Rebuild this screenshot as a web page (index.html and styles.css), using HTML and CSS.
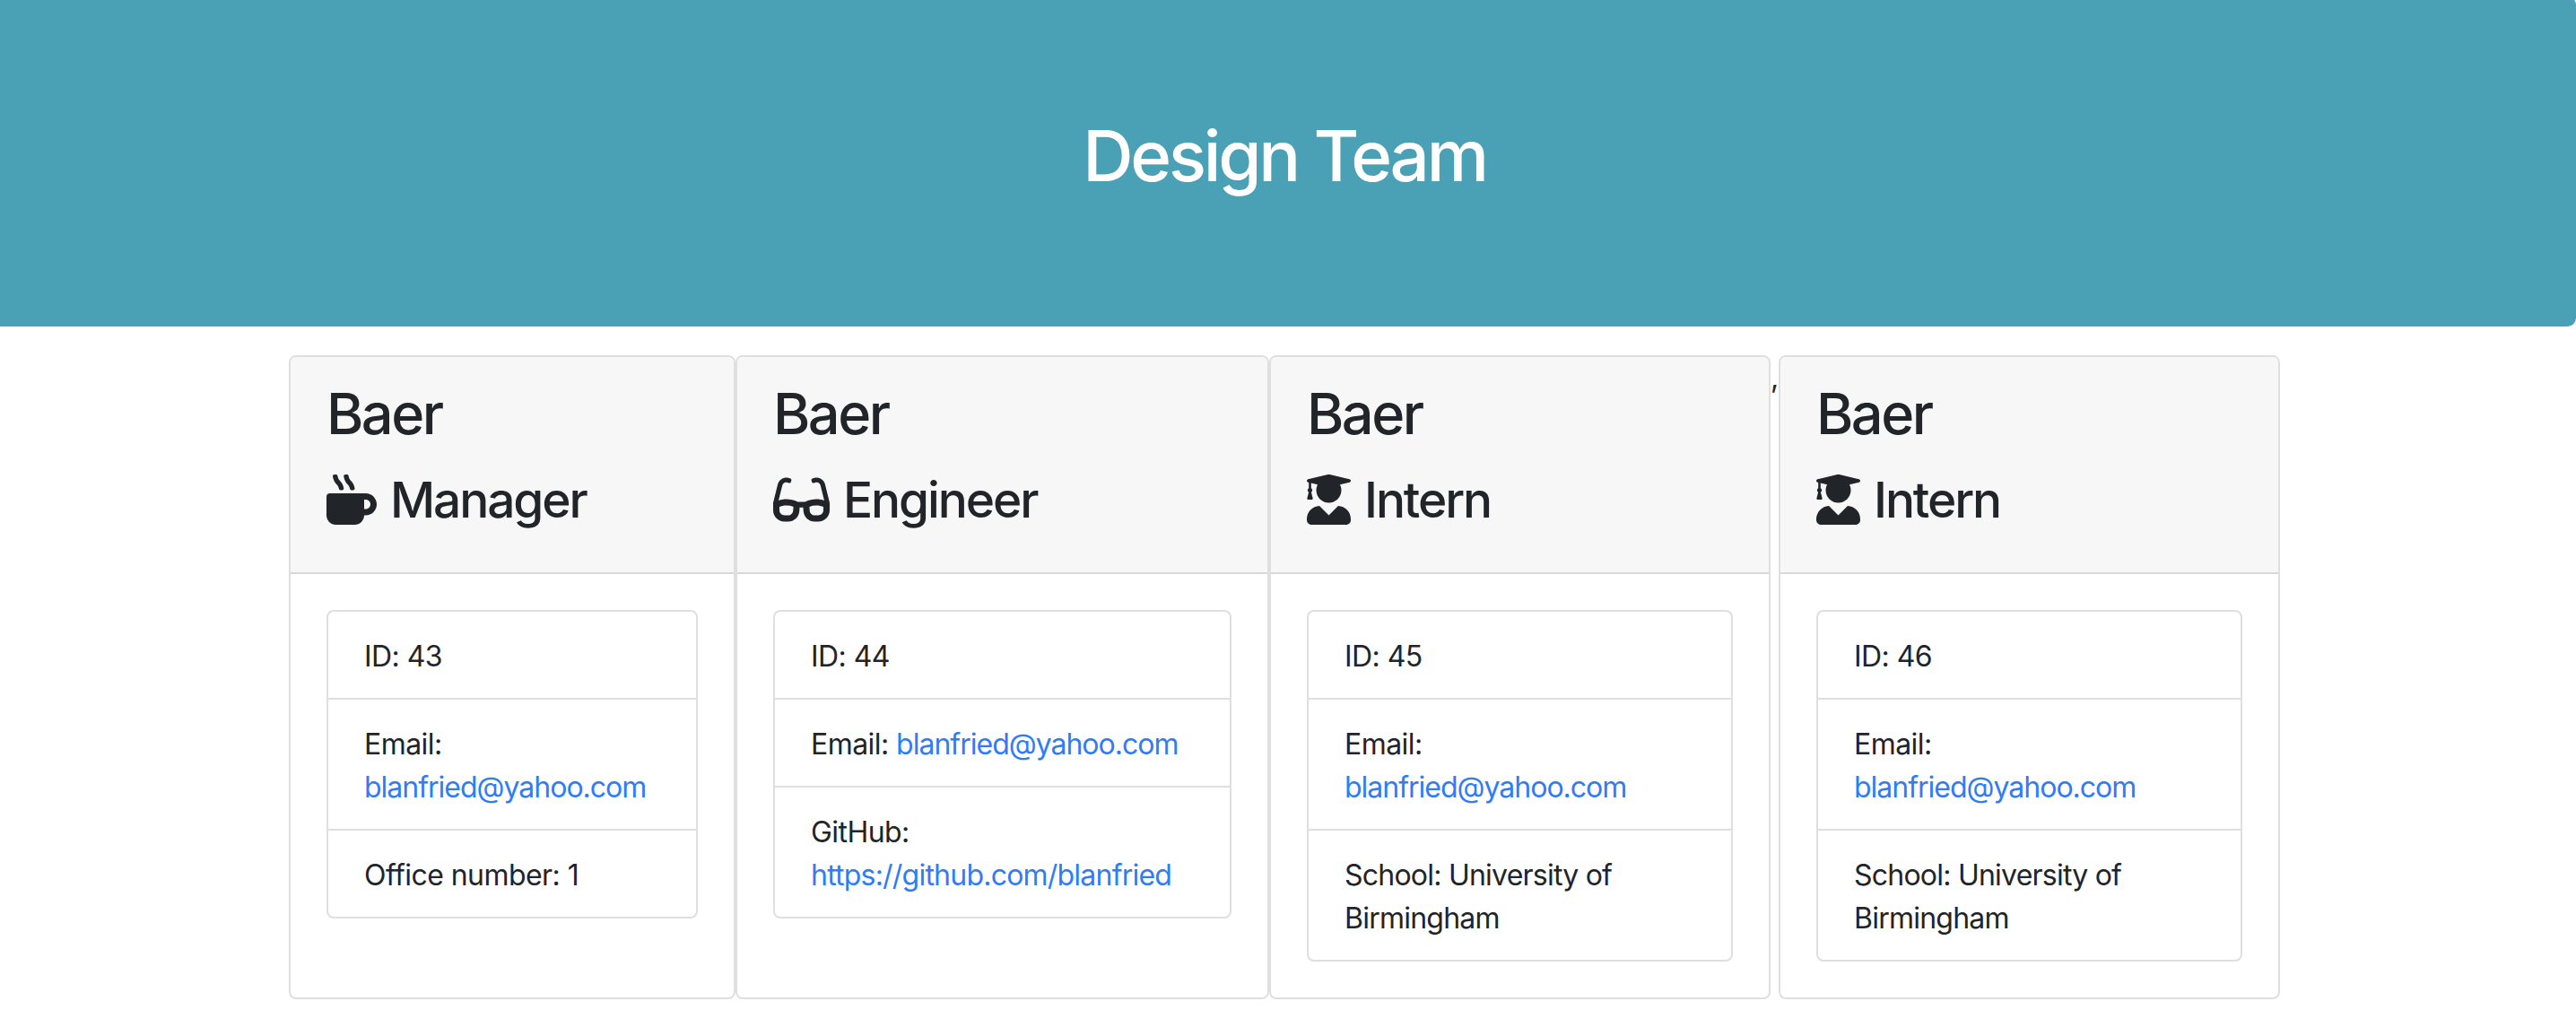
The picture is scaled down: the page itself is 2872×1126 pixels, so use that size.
FILE: index.html
```html
<!DOCTYPE html>
<html lang="en">
<head>
<meta charset="utf-8">
<title>Design Team</title>
<link rel="stylesheet" href="styles.css">
</head>
<body>
<svg class="sprite" aria-hidden="true">
  <symbol id="mug" viewBox="0 0 512 512"><path d="M127.1 146.5c1.3 7.7 8 13.5 16 13.5h16.5c9.8 0 17.6-8.5 16.3-18-3.8-28.2-16.4-54.2-36.6-74.7-14.4-14.7-23.6-33.3-26.4-53.5C111.8 5.9 105 0 96.8 0H80.4C70.6 0 63 8.5 64.1 18c3.9 31.9 18 61.3 40.6 84.4 12 12.2 19.7 27.5 22.4 44.1zm112 0c1.3 7.7 8 13.5 16 13.5h16.5c9.8 0 17.6-8.5 16.3-18-3.8-28.2-16.4-54.2-36.6-74.7-14.4-14.7-23.6-33.3-26.4-53.5C223.8 5.9 217 0 208.8 0h-16.4c-9.8 0-17.5 8.5-16.3 18 3.9 31.9 18 61.3 40.6 84.4 12 12.2 19.7 27.5 22.4 44.1zM400 192H32c-17.7 0-32 14.3-32 32v192c0 53 43 96 96 96h192c53 0 96-43 96-96h16c61.8 0 112-50.2 112-112s-50.2-112-112-112zm0 160h-16v-96h16c26.5 0 48 21.5 48 48s-21.5 48-48 48z"/></symbol>
  <symbol id="glasses" viewBox="0 0 576 512"><path d="M574.1 280.37L528.75 98.66c-5.91-23.7-21.59-44.05-43-55.81-21.44-11.73-46.97-14.11-70.19-6.33l-15.25 5.08c-8.39 2.79-12.92 11.86-10.12 20.24l5.06 15.18c2.79 8.38 11.85 12.91 20.23 10.12l13.18-4.39c10.87-3.62 23-3.57 33.16 1.73 10.29 5.37 17.57 14.56 20.37 25.82l38.46 153.82c-22.19-6.81-49.79-12.46-81.2-12.46-34.77 0-73.98 7.02-114.85 26.74h-73.18c-40.87-19.74-80.08-26.75-114.86-26.75-31.42 0-59.02 5.65-81.21 12.46l38.46-153.83c2.79-11.25 10.09-20.45 20.38-25.81 10.16-5.3 22.28-5.35 33.15-1.73l13.17 4.39c8.38 2.79 17.44-1.74 20.23-10.12l5.06-15.18c2.8-8.38-1.73-17.45-10.12-20.24l-15.25-5.08c-23.22-7.78-48.75-5.41-70.19 6.33-21.41 11.77-37.09 32.11-43 55.8L1.9 280.37A64.218 64.218 0 0 0 0 295.86v70.25C0 429.01 51.58 480 115.2 480h37.12c60.28 0 110.37-45.94 114.88-105.37l2.93-38.63h35.75l2.93 38.63C313.31 434.06 363.4 480 423.68 480h37.12c63.62 0 115.2-50.99 115.2-113.88v-70.25c0-5.23-.64-10.43-1.9-15.5zm-370.72 89.42c-1.97 25.91-24.4 46.21-51.06 46.21H115.2C86.97 416 64 393.62 64 366.11v-37.54c18.12-6.49 43.42-12.92 72.58-12.92 23.86 0 47.26 4.33 69.93 12.92l-3.13 41.22zM512 366.12c0 27.51-22.97 49.88-51.2 49.88h-37.12c-26.67 0-49.1-20.3-51.06-46.21l-3.13-41.22c22.67-8.59 46.07-12.92 69.95-12.92 29.13 0 54.43 6.44 72.55 12.93v37.54z"/></symbol>
  <symbol id="graduate" viewBox="0 0 448 512"><path d="M319.4 320.6L224 416l-95.4-95.4C57.1 323.7 0 382.2 0 454.4v9.6c0 26.5 21.5 48 48 48h352c26.5 0 48-21.5 48-48v-9.6c0-72.2-57.1-130.7-128.6-133.8zM13.6 79.8l6.4 1.5v58.4c-7 4.2-12 11.5-12 20.3 0 8.4 4.6 15.4 11.1 19.7L3.5 242c-1.7 6.9 2.1 14 7.6 14h41.8c5.5 0 9.3-7.1 7.6-14l-15.6-62.3C51.4 175.4 56 168.4 56 160c0-8.8-5-16.1-12-20.3V87.1l66 15.9c-8.6 17.2-14 36.4-14 57 0 70.7 57.3 128 128 128s128-57.3 128-128c0-20.6-5.3-39.8-14-57l96.3-23.2c18.2-4.4 18.2-27.1 0-31.5l-190.4-46c-13-3.1-26.7-3.1-39.7 0L13.6 48.2c-18.1 4.4-18.1 27.2 0 31.6z"/></symbol>
</svg>
<header class="jumbotron"><h1 class="title">Design Team</h1></header>
<main class="team">
  <section class="card card-manager">
    <div class="card-header">
      <h2 class="name">Baer</h2>
      <h3 class="role"><svg class="icon icon-mug"><use href="#mug"/></svg><span>Manager</span></h3>
    </div>
    <div class="card-body">
      <ul class="list">
        <li class="item">ID: 43</li>
        <li class="item">Email: <br><a class="link link-email" href="mailto:blanfried@yahoo.com">blanfried@yahoo.com</a></li>
        <li class="item">Office number: 1</li>
      </ul>
    </div>
  </section>
  <section class="card card-engineer">
    <div class="card-header">
      <h2 class="name">Baer</h2>
      <h3 class="role"><svg class="icon icon-glasses"><use href="#glasses"/></svg><span>Engineer</span></h3>
    </div>
    <div class="card-body">
      <ul class="list">
        <li class="item">ID: 44</li>
        <li class="item">Email: <a class="link link-email" href="mailto:blanfried@yahoo.com">blanfried@yahoo.com</a></li>
        <li class="item">GitHub: <br><a class="link link-github" href="https://github.com/blanfried">https://github.com/blanfried</a></li>
      </ul>
    </div>
  </section>
  <section class="card card-intern">
    <div class="card-header">
      <h2 class="name">Baer</h2>
      <h3 class="role"><svg class="icon icon-graduate"><use href="#graduate"/></svg><span>Intern</span></h3>
    </div>
    <div class="card-body">
      <ul class="list">
        <li class="item">ID: 45</li>
        <li class="item">Email: <br><a class="link link-email" href="mailto:blanfried@yahoo.com">blanfried@yahoo.com</a></li>
        <li class="item item-school">School: University of<br>Birmingham</li>
      </ul>
    </div>
  </section>
  <span class="separator">,</span>
  <section class="card card-intern">
    <div class="card-header">
      <h2 class="name">Baer</h2>
      <h3 class="role"><svg class="icon icon-graduate"><use href="#graduate"/></svg><span>Intern</span></h3>
    </div>
    <div class="card-body">
      <ul class="list">
        <li class="item">ID: 46</li>
        <li class="item">Email: <br><a class="link link-email" href="mailto:blanfried@yahoo.com">blanfried@yahoo.com</a></li>
        <li class="item item-school">School: University of<br>Birmingham</li>
      </ul>
    </div>
  </section>
</main>
</body>
</html>
```
FILE: styles.css
```css
* { box-sizing: border-box; }
html { overflow: hidden; }
body {
  margin: 0;
  display: flow-root;
  background: #fff;
  color: #212529;
  font: 400 32px/48px Inter, "Liberation Sans", sans-serif;
  letter-spacing: -0.55px;
}
.sprite { display: none; }
.jumbotron {
  margin: -4px 0 32px -8px;
  padding: 130px 0 142px;
  border-radius: 9.6px;
  background: #4aa0b5;
  color: #fff;
  text-align: center;
}
.title, .name, .role { margin: 0; font-weight: 530; }
.title { font-size: 78px; line-height: 96px; letter-spacing: -3.2px; }
.team { display: flex; margin-left: 322px; }
.card {
  flex: none;
  height: 718px;
  border: 2px solid #dfdfdf;
  border-radius: 8px;
  overflow: hidden;
}
.card-manager { width: 498px; }
.card-engineer { width: 595px; }
.card-intern { width: 559px; }
.separator { width: 9px; padding-top: 1px; }
.card-header {
  height: 242px;
  padding: 25px 40px 23px;
  border-bottom: 2px solid #d8d8d8;
  background: #f7f7f7;
}
.name { font-size: 63px; line-height: 76.8px; margin-bottom: 15px; letter-spacing: -2.5px; }
.role {
  display: flex;
  align-items: center;
  gap: 15px;
  font-size: 55px;
  line-height: 84px;
  letter-spacing: -2.1px;
}
.icon { height: 56px; fill: currentColor; }
.icon-mug { width: 56px; }
.icon-glasses { width: 63px; }
.icon-graduate { width: 49px; }
.card-body { padding: 40px; }
.list {
  margin: 0;
  padding: 0;
  list-style: none;
  border: 2px solid #dfdfdf;
  border-radius: 8px;
}
.item { padding: 26px 40px 22px; white-space: nowrap; }
.item + .item { border-top: 2px solid #dfdfdf; }
.item-school { letter-spacing: -0.77px; }
.link { color: #2f7cf6; text-decoration: none; }
.link-email { letter-spacing: -1px; }
.link-github { letter-spacing: -0.78px; }
```
